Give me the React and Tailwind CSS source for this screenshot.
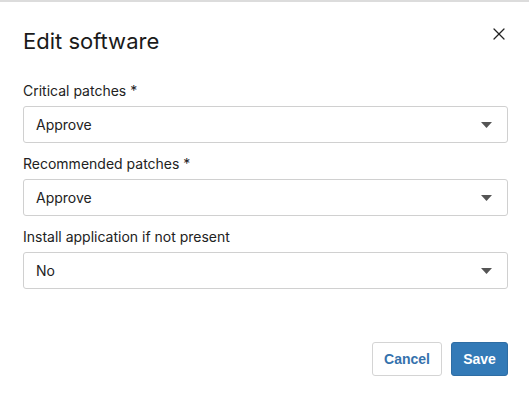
import { X } from "lucide-react";

const fields = [
  { label: "Critical patches *", value: "Approve" },
  { label: "Recommended patches *", value: "Approve" },
  { label: "Install application if not present", value: "No" },
];

function SelectField({ label, value }) {
  return (
    <div>
      <div className="text-[14px] leading-[18px] text-[#222] mb-[6px]">{label}</div>
      <div className="h-[37px] border border-[#d0d0d0] rounded-[3px] flex items-center justify-between pl-[12px] pr-[15px]">
        <span className="text-[14px] text-[#222]">{value}</span>
        <svg width="11" height="6" viewBox="0 0 11 6">
          <path d="M0 0 H11 L5.5 6 Z" fill="#555" />
        </svg>
      </div>
    </div>
  );
}

export default function App() {
  return (
    <div className="w-[529px] h-[399px] bg-white border-t-2 border-[#dcdcdc] overflow-hidden font-['Inter','Noto_Sans',sans-serif]">
      <div className="pl-[23px] pr-[21px] pt-[25px]">
        <div className="flex items-start justify-between">
          <h2 className="text-[22px] leading-[28px] text-[#1a1a1a]">Edit software</h2>
          <button className="mt-[-3px] mr-[-1px] text-[#222]">
            <X size={20} strokeWidth={1.5} />
          </button>
        </div>

        <div className="mt-[27px] flex flex-col gap-[12px]">
          {fields.map((f) => (
            <SelectField key={f.label} label={f.label} value={f.value} />
          ))}
        </div>

        <div className="mt-[53px] flex justify-end gap-[9px] font-['Liberation_Sans',Arial,sans-serif]">
          <button className="h-[34px] w-[70px] border border-[#d4d4d4] rounded-[3px] text-[14px] font-bold text-[#3572ad] bg-white">
            Cancel
          </button>
          <button className="h-[34px] w-[57px] border border-[#2e6da4] rounded-[3px] text-[14px] font-bold text-white bg-[#337ab7]">
            Save
          </button>
        </div>
      </div>
    </div>
  );
}
